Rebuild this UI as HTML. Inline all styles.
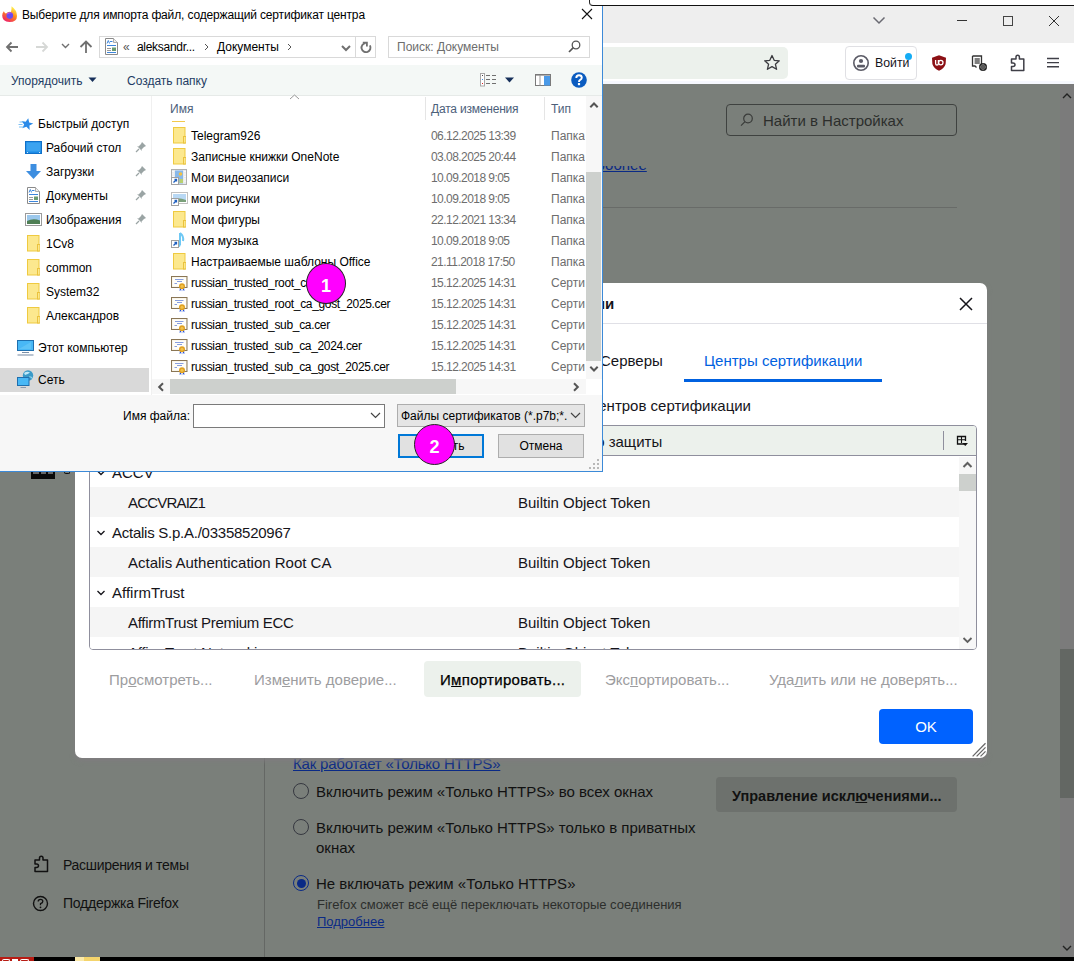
<!DOCTYPE html>
<html><head><meta charset="utf-8">
<style>
*{box-sizing:border-box;margin:0;padding:0}
html,body{width:1074px;height:961px;overflow:hidden;background:#7a7f7a;font-family:"Liberation Sans",sans-serif;position:relative}
.a{position:absolute;white-space:nowrap}
.t12{font-size:12px;line-height:16px}
.dt{letter-spacing:-0.55px}
.b14{line-height:14px}
.t15{font-size:15px;line-height:20px}
</style></head><body>

<!-- top strip of window behind -->


<!-- firefox tab bar -->
<div class="a" style="left:602px;top:6px;width:472px;height:37px;background:#eeeeee"></div>
<!-- tab list chevron -->
<svg class="a" style="left:872px;top:15px" width="14" height="10" viewBox="0 0 14 10"><path d="M1.5 2.5 L7 8 L12.5 2.5" fill="none" stroke="#6a6a72" stroke-width="1.5"/></svg>
<!-- min max close -->
<div class="a" style="left:957px;top:20px;width:10px;height:1px;background:#333"></div>
<div class="a" style="left:1003px;top:16px;width:10px;height:10px;border:1.2px solid #444"></div>
<svg class="a" style="left:1049px;top:16px" width="10" height="10" viewBox="0 0 10 10"><path d="M0 0 L10 10 M10 0 L0 10" stroke="#333" stroke-width="1"/></svg>

<!-- toolbar -->
<div class="a" style="left:602px;top:43px;width:472px;height:41px;background:#fff"></div>
<div class="a" style="left:602px;top:81px;width:472px;height:3px;background:#f6f8fe"></div>
<div class="a" style="left:602px;top:47px;width:186px;height:32px;background:#ecf1ec;border-radius:0 5px 5px 0"></div>
<svg class="a" style="left:763px;top:54px" width="18" height="18" viewBox="0 0 18 18"><path d="M9 1.5 L11.2 6.3 L16.3 6.8 L12.4 10.2 L13.6 15.3 L9 12.6 L4.4 15.3 L5.6 10.2 L1.7 6.8 L6.8 6.3 Z" fill="none" stroke="#3a3a3f" stroke-width="1.3" stroke-linejoin="round"/></svg>
<div class="a" style="left:845px;top:46px;width:72px;height:34px;border:1px solid #e0e0e4;border-radius:4px;background:#fff"></div>
<svg class="a" style="left:852px;top:54px" width="18" height="18" viewBox="0 0 18 18"><circle cx="9" cy="9" r="7.2" fill="none" stroke="#5b5b66" stroke-width="1.6"/><circle cx="9" cy="7" r="2.1" fill="#5b5b66"/><rect x="5" y="10.8" width="8" height="2.6" rx="1" fill="#5b5b66"/></svg>
<div class="a" style="left:875px;top:55px;color:#15141a;font-size:12.3px;line-height:16px">Войти</div>
<div class="a" style="left:905px;top:53px;width:7px;height:7px;border-radius:50%;background:#14acf5"></div>
<svg class="a" style="left:931px;top:55px" width="16" height="16" viewBox="0 0 16 16"><path d="M8 0.3 L15 2.8 L14.6 9 Q13.2 13.8 8 15.8 Q2.8 13.8 1.4 9 L1 2.8 Z" fill="#8c1015"/><path d="M4.6 5 V8.4 Q4.6 10 6 10 Q7.4 10 7.4 8.4 V5" fill="none" stroke="#fff" stroke-width="1.3"/><circle cx="9.8" cy="7.6" r="2.2" fill="none" stroke="#fff" stroke-width="1.3"/></svg>
<svg class="a" style="left:971px;top:55px" width="17" height="17" viewBox="0 0 17 17"><path d="M1.5 1 H10.5 V9 M1.5 1 V11 H4 L5.5 12.5" fill="none" stroke="#333" stroke-width="1.3"/><path d="M3.5 3 H9 V9 H3.5Z" fill="#9a9a9a"/><path d="M5 3 V9 M7 3 V9" stroke="#555" stroke-width="0.8"/><circle cx="12" cy="12" r="4" fill="#222"/><circle cx="12" cy="12" r="2.3" fill="none" stroke="#888" stroke-width="0.8"/><path d="M8.5 12 H15.5 M12 8.5 V15.5" stroke="#888" stroke-width="0.7"/></svg>
<svg class="a" style="left:1009px;top:54px" width="17" height="18" viewBox="0 0 17 18"><path d="M2.5 5 H7 V3 Q7 1.2 8.7 1.2 Q10.4 1.2 10.4 3 V5 H14.8 V16.5 H2.5 V12.5 H4 Q6 12.5 6 10.8 Q6 9 4 9 H2.5 Z" fill="none" stroke="#3f3f47" stroke-width="1.5" stroke-linejoin="round"/></svg>
<svg class="a" style="left:1046px;top:56px" width="14" height="13" viewBox="0 0 14 13"><path d="M1 2.5 H13 M1 6.6 H13 M1 10.8 H13" stroke="#3f3f47" stroke-width="1.4"/></svg>

<!-- ========== settings page (dimmed) ========== -->
<div class="a" style="left:1060px;top:84px;width:14px;height:873px;background:#7b7b7b"></div>
<div class="a" style="left:1060px;top:649px;width:14px;height:149px;background:#636763"></div>
<svg class="a" style="left:1061px;top:92px" width="12" height="8" viewBox="0 0 12 8"><path d="M2 6 L6 2 L10 6" fill="none" stroke="#222" stroke-width="1.4"/></svg>
<svg class="a" style="left:1061px;top:944px" width="12" height="8" viewBox="0 0 12 8"><path d="M2 2 L6 6 L10 2" fill="none" stroke="#222" stroke-width="1.4"/></svg>

<div class="a" style="left:264px;top:84px;width:1px;height:873px;background:#646764"></div>

<!-- search -->
<div class="a" style="left:726px;top:104px;width:231px;height:32px;border:1px solid #3f4240;border-radius:4px"></div>
<svg class="a" style="left:739px;top:112px" width="16" height="16" viewBox="0 0 16 16"><circle cx="9" cy="6.5" r="4.3" fill="none" stroke="#3a3c3a" stroke-width="1.2"/><path d="M6 9.6 L2 13.6" stroke="#3a3c3a" stroke-width="1.3"/></svg>
<div class="a t15" style="left:763px;top:111px;color:#2c2e2c">Найти в Настройках</div>

<div class="a" style="left:560px;top:166px;width:100px;height:8px;overflow:hidden"><div class="a t15" style="left:9px;top:-11px;color:#0a2a86;text-decoration:underline">Подробнее</div></div>
<div class="a" style="left:293px;top:207px;width:664px;height:1px;background:#686b68"></div>

<!-- black icon peeking -->
<div class="a" style="left:31px;top:462px;width:24px;height:17px;background:#0a0a0a"></div><div class="a" style="left:33px;top:472px;width:6px;height:2px;background:#666"></div><div class="a" style="left:41px;top:472px;width:5px;height:2px;background:#666"></div><div class="a" style="left:48px;top:472px;width:5px;height:2px;background:#666"></div><div class="a" style="left:64px;top:470px;width:6px;height:4px;border:1.5px solid #111;border-top:none;border-radius:0 0 2px 2px"></div>

<div class="a t15" style="left:293px;top:754px;color:#0a2a86;text-decoration:underline;letter-spacing:-0.2px">Как работает «Только HTTPS»</div>
<div class="a" style="left:293px;top:783px;width:16px;height:16px;border:1.3px solid #363840;border-radius:50%"></div>
<div class="a t15" style="left:316px;top:782px;color:#111">Включить режим «Только HTTPS» во всех окнах</div>
<div class="a" style="left:293px;top:819px;width:16px;height:16px;border:1.3px solid #363840;border-radius:50%"></div>
<div class="a t15" style="left:316px;top:818px;color:#111">Включить режим «Только HTTPS» только в приватных</div>
<div class="a t15" style="left:316px;top:838px;color:#111">окнах</div>
<div class="a" style="left:293px;top:875px;width:16px;height:16px;border:1.6px solid #0a2a86;border-radius:50%;background:#7a7f7a"></div>
<div class="a" style="left:296.5px;top:878.5px;width:9px;height:9px;border-radius:50%;background:#0a2a86"></div>
<div class="a t15" style="left:316px;top:874px;color:#111">Не включать режим «Только HTTPS»</div>
<div class="a" style="left:317px;top:897px;font-size:13px;line-height:15px;color:#2c2e2c">Firefox сможет всё ещё переключать некоторые соединения</div>
<div class="a" style="left:317px;top:914px;font-size:13px;line-height:15px;color:#0a2a86;text-decoration:underline">Подробнее</div>
<div class="a" style="left:716px;top:777px;width:241px;height:35px;border-radius:4px;background:#6d716d"></div>
<div class="a t15" style="left:732px;top:786px;color:#111;font-weight:bold;font-size:14.5px">Управление искл<u>ю</u>чениями...</div>

<svg class="a" style="left:33px;top:855px" width="17" height="18" viewBox="0 0 17 18"><path d="M2 5 H6.5 V3 Q6.5 1.2 8.3 1.2 Q10 1.2 10 3 V5 H14.5 V16.5 H2 V12.5 H3.5 Q5.5 12.5 5.5 10.8 Q5.5 9 3.5 9 H2 Z" fill="none" stroke="#111" stroke-width="1.5" stroke-linejoin="round"/></svg>
<div class="a t15" style="left:63px;top:855px;color:#111;font-size:14px;letter-spacing:-0.3px">Расширения и темы</div>
<svg class="a" style="left:32px;top:895px" width="17" height="17" viewBox="0 0 17 17"><circle cx="8.5" cy="8.5" r="7" fill="none" stroke="#111" stroke-width="1.4"/><path d="M6.2 6.6 Q6.2 4.4 8.5 4.4 Q10.8 4.4 10.8 6.4 Q10.8 7.8 8.5 8.6 V10.2" fill="none" stroke="#111" stroke-width="1.3"/><circle cx="8.5" cy="12.3" r="0.9" fill="#111"/></svg>
<div class="a t15" style="left:63px;top:893px;color:#111;font-size:14px;letter-spacing:-0.25px">Поддержка Firefox</div>

<!-- taskbar -->
<div class="a" style="left:0;top:957px;width:1074px;height:4px;background:#000"></div>
<div class="a" style="left:0;top:957px;width:34px;height:4px;background:#b81c14"></div><div class="a" style="left:2px;top:959px;width:8px;height:3px;border:1.2px solid #fff;border-bottom:none;border-radius:2px 2px 0 0"></div><div class="a" style="left:12px;top:959px;width:6px;height:3px;background:#fff"></div><div class="a" style="left:20px;top:959px;width:9px;height:3px;border:1.2px solid #fff;border-bottom:none;border-radius:2px 2px 0 0"></div>
<div class="a" style="left:75px;top:957px;width:25px;height:4px;background:#f4d46c"></div><div class="a" style="left:75px;top:957px;width:9px;height:4px;background:#fbe9a8"></div>

<!-- ========== certificate manager modal ========== -->
<div id="modal" class="a" style="left:75px;top:283px;width:912px;height:475px;background:#fff;border-radius:7px;overflow:hidden;box-shadow:0 3px 5px rgba(128,124,128,0.9)">
<div class="a t15" style="left:330px;top:11px;font-weight:bold;color:#15141a">Управление сертификатами</div>
<svg class="a" style="left:884px;top:14px" width="14" height="14" viewBox="0 0 14 14"><path d="M1 1 L13 13 M13 1 L1 13" stroke="#15141a" stroke-width="1.5"/></svg>
<div class="a" style="left:0;top:40px;width:912px;height:1px;background:#e0e0e6"></div>
<div class="a t15" style="left:75px;top:68px;color:#15141a">Ваши сертификаты</div>
<div class="a t15" style="left:245px;top:68px;color:#15141a">Решения об аутентификации</div>
<div class="a t15" style="left:476px;top:68px;color:#15141a">Люди</div>
<div class="a t15" style="left:525px;top:68px;color:#15141a">Серверы</div>
<div class="a t15" style="left:629px;top:68px;color:#0061e0">Центры сертификации</div>
<div class="a" style="left:609px;top:96px;width:198px;height:3px;background:#0061e0"></div>
<div class="a t15" style="left:0px;top:113px;width:676px;text-align:right;color:#15141a">У вас хранятся сертификаты, служащие для идентификации следующих центров сертификации</div>
<!-- tree -->
<div class="a" style="left:14px;top:142px;width:888px;height:225px;border:1px solid #8f8f9d;border-radius:4px;overflow:hidden">
  <div class="a" style="left:0;top:0;width:886px;height:30px;background:#ecf1ec;border-bottom:1px solid #8f8f9d"></div>
  <div class="a t15" style="left:23px;top:6px;color:#15141a">Имя сертификата</div>
  <div class="a t15" style="left:436px;top:6px;color:#15141a">Устройство защиты</div>
  <div class="a" style="left:853px;top:5px;width:1px;height:19px;background:#8f8f9d"></div>
  <svg class="a" style="left:866px;top:9px" width="14" height="14" viewBox="0 0 14 14"><path d="M8.5 9 H1.5 V1.5 H9.5 V6" fill="none" stroke="#111" stroke-width="1.3"/><path d="M1.5 4.8 H9.5 M5.5 1.5 V8" stroke="#111" stroke-width="1.1"/><path d="M6.5 8 H12 L9.25 11Z" fill="#111"/></svg>
  <div class="a" style="left:0;top:31px;width:869px;height:193px;background:#fff">
    <div class="a" style="left:0;top:30px;width:869px;height:30px;background:#f5f5f5"></div>
    <div class="a" style="left:0;top:90px;width:869px;height:30px;background:#f5f5f5"></div>
    <div class="a" style="left:0;top:150px;width:869px;height:30px;background:#f5f5f5"></div>
  </div>
  <div class="a" style="left:869px;top:31px;width:17px;height:193px;background:#f7f7f7"></div>
  <div class="a" style="left:869px;top:48px;width:17px;height:17px;background:#cdd0cd"></div>
  <svg class="a" style="left:871px;top:34px" width="13" height="10" viewBox="0 0 13 10"><path d="M2.5 7 L6.5 3 L10.5 7" fill="none" stroke="#606060" stroke-width="2"/></svg>
  <svg class="a" style="left:871px;top:209px" width="13" height="10" viewBox="0 0 13 10"><path d="M2.5 3 L6.5 7 L10.5 3" fill="none" stroke="#606060" stroke-width="1.8"/></svg>
</div>
<div class="a" style="left:15px;top:174px;width:868px;height:192px;overflow:hidden">
  <svg class="a" style="left:6px;top:12px" width="10" height="8" viewBox="0 0 10 8"><path d="M1.5 2 L5 5.5 L8.5 2" fill="none" stroke="#15141a" stroke-width="1.3"/></svg>
  <div class="a t15" style="left:22px;top:6px;color:#15141a">ACCV</div>
  <div class="a t15" style="left:38px;top:36px;color:#15141a;letter-spacing:-0.8px">ACCVRAIZ1</div>
  <div class="a t15" style="left:428px;top:36px;color:#15141a">Builtin Object Token</div>
  <svg class="a" style="left:6px;top:72px" width="10" height="8" viewBox="0 0 10 8"><path d="M1.5 2 L5 5.5 L8.5 2" fill="none" stroke="#15141a" stroke-width="1.3"/></svg>
  <div class="a t15" style="left:22px;top:66px;color:#15141a;letter-spacing:-0.25px">Actalis S.p.A./03358520967</div>
  <div class="a t15" style="left:38px;top:96px;color:#15141a">Actalis Authentication Root CA</div>
  <div class="a t15" style="left:428px;top:96px;color:#15141a">Builtin Object Token</div>
  <svg class="a" style="left:6px;top:132px" width="10" height="8" viewBox="0 0 10 8"><path d="M1.5 2 L5 5.5 L8.5 2" fill="none" stroke="#15141a" stroke-width="1.3"/></svg>
  <div class="a t15" style="left:22px;top:126px;color:#15141a">AffirmTrust</div>
  <div class="a t15" style="left:38px;top:156px;color:#15141a;letter-spacing:-0.3px">AffirmTrust Premium ECC</div>
  <div class="a t15" style="left:428px;top:156px;color:#15141a">Builtin Object Token</div>
  <div class="a t15" style="left:38px;top:186px;color:#15141a;letter-spacing:-0.3px">AffirmTrust Networking</div>
  <div class="a t15" style="left:428px;top:186px;color:#15141a">Builtin Object Token</div>
</div>
<!-- buttons -->
<div class="a t15" style="left:34px;top:387px;color:#9d9d9f">Пр<u>о</u>смотреть...</div>
<div class="a t15" style="left:179px;top:387px;color:#9d9d9f">Изм<u>е</u>нить доверие...</div>
<div class="a" style="left:349px;top:378px;width:157px;height:36px;border-radius:4px;background:#ecf1ec"></div>
<div class="a t15" style="left:365px;top:387px;color:#000;letter-spacing:0.3px;-webkit-text-stroke:0.25px #000">И<u>м</u>портировать...</div>
<div class="a t15" style="left:530px;top:387px;color:#9d9d9f">Экс<u>п</u>ортировать...</div>
<div class="a t15" style="left:694px;top:387px;color:#9d9d9f">Уда<u>л</u>ить или не доверять...</div>
<div class="a" style="left:804px;top:426px;width:94px;height:35px;border-radius:4px;background:#0062ff"></div>
<div class="a t15" style="left:804px;top:434px;width:94px;text-align:center;color:#fff">OK</div>
<svg class="a" style="left:895px;top:457px" width="17" height="17" viewBox="0 0 17 17"><path d="M2.6 16.4 L15.5 3.3 M6.6 16.4 L15.5 7.4 M10.5 16.4 L15.5 11.4" stroke="#6a6a6a" stroke-width="1.3"/></svg>
</div>

<!-- ========== file dialog ========== -->
<div id="fd" class="a" style="left:0;top:0;width:603px;height:472px;background:#f7f7f7;border-right:1px solid #3c8ad8;border-bottom:1px solid #3c8ad8;overflow:hidden">
<svg width="0" height="0" style="position:absolute">
<defs>
<g id="fold"><rect x="1.5" y="0.5" width="11.5" height="15.5" fill="#fce88e" stroke="#efca40"/><rect x="11.5" y="9.5" width="2.5" height="6.5" fill="#fce78a" stroke="#eac23e"/></g>
<g id="cert"><rect x="0.5" y="1.5" width="15.5" height="11" fill="#f3efe2" stroke="#8a7655"/><rect x="1.5" y="2.5" width="13.5" height="9" fill="#fffef8"/><path d="M4 4.5 H12.5 M6 6.5 H11 M3.5 8.5 H6" stroke="#6a86d8" stroke-width="0.8"/><path d="M9 12 L8.6 16 L10 15 L11 16.4Z M13 12 L13.4 16 L12 15 L11 16.4Z" fill="#1f4fe0"/><circle cx="11" cy="11.3" r="3" fill="#e0a020"/><circle cx="11" cy="11.3" r="1.5" fill="#f2c24a"/></g>
<g id="vid"><rect x="0.5" y="0.5" width="15" height="15" fill="#e8eaec" stroke="#b0b0b0"/><path d="M2 2 V14 M14 2 V14" stroke="#fff" stroke-width="1.4" stroke-dasharray="1.2 1.2"/><rect x="4" y="1.5" width="8" height="13" fill="#88b8ea"/><circle cx="9.5" cy="5" r="1.8" fill="#f2c040"/><rect x="4" y="8" width="3.5" height="3" fill="#e58ab0"/><rect x="8.5" y="10" width="3.5" height="4" fill="#b8d070"/><rect x="0.5" y="8.5" width="7" height="7" fill="#fff" stroke="#a0a0a0"/><path d="M2.5 13.5 L5.3 10.7 M3.5 10.5 H5.5 V12.5" stroke="#1f5fbf" stroke-width="1.3" fill="none"/></g>
<g id="pic"><rect x="0.5" y="2.5" width="16" height="11" fill="#fff" stroke="#c0c0c0"/><rect x="2" y="4" width="13" height="8" fill="#b8d8f4"/><path d="M2 9 Q8 7 15 10 V12 H2Z" fill="#7aa07a"/><rect x="0.5" y="8.5" width="7" height="7" fill="#fff" stroke="#a0a0a0"/><path d="M2.5 13.5 L5.3 10.7 M3.5 10.5 H5.5 V12.5" stroke="#1f5fbf" stroke-width="1.3" fill="none"/></g>
<g id="mus"><path d="M9 1 V13 M9 1 Q13 4 12 9" stroke="#6ec8f4" stroke-width="2" fill="none"/><ellipse cx="7.5" cy="13.5" rx="2" ry="1.6" fill="#6ec8f4"/><rect x="0.5" y="8.5" width="7" height="7" fill="#fff" stroke="#a0a0a0"/><path d="M2.5 13.5 L5.3 10.7 M3.5 10.5 H5.5 V12.5" stroke="#1f5fbf" stroke-width="1.3" fill="none"/></g>
<g id="star"><path d="M10 2 L11.8 6 L16 6.2 L12.7 9 L13.8 13.2 L10 10.8 L6.3 13.2 L7.3 9 L4 6.2 L8.2 6Z" fill="#2a8ae8" transform="rotate(12 10 8)"/><path d="M2.5 6 H6 M1.5 8.5 H5.5 M2 11 H6.5" stroke="#7cc0f4" stroke-width="1"/></g>
<g id="desk"><rect x="0.5" y="2.5" width="16" height="12" fill="#1d8be6" stroke="#1070c8"/><rect x="1.5" y="3.5" width="14" height="9" fill="#3ba3f0"/><path d="M2 13.5 H3 M14 13.5 H15" stroke="#fff" stroke-width="0.8"/></g>
<g id="down"><path d="M5.5 1 H11.5 V8 H16 L8.5 16 L1 8 H5.5Z" fill="#3d8ee0"/></g>
<g id="doc"><path d="M2.5 0.5 H10.5 L14.5 4.5 V16.5 H2.5Z" fill="#fff" stroke="#8a8a8a"/><path d="M10.5 0.5 V4.5 H14.5" fill="#eee" stroke="#9a9a9a" stroke-width="0.8"/><path d="M4 5.5 L5.3 2.5 L6.6 5.5" stroke="#2a7ad8" stroke-width="0.9" fill="none"/><path d="M7 3.5 H9.5 M4 7.5 H13 M4 14.5 H13" stroke="#3c86dc" stroke-width="1"/><path d="M4 10.5 H8 M4 12.5 H8" stroke="#9a9a9a" stroke-width="1"/><rect x="9" y="9.5" width="4" height="3.5" fill="#6a9a70"/></g>
<g id="img"><rect x="0.5" y="2.5" width="16" height="12" fill="#fff" stroke="#9a9a9a"/><rect x="2" y="4" width="13" height="9" fill="#9cc8ec"/><path d="M2 10 Q8 7 15 9.5 V13 H2Z" fill="#4f7f55"/></g>
<g id="pc"><rect x="0.5" y="2.5" width="16" height="10" fill="#48b8f6" stroke="#1f6fae"/><path d="M2 11 L14 4 V11Z" fill="#6ccaf8" opacity="0.6"/><path d="M5 14.5 H12" stroke="#7a8fa8" stroke-width="1"/><path d="M0.5 17 H16.5" stroke="#8a9ab0" stroke-width="1.2"/></g>
<g id="net"><circle cx="11" cy="5.5" r="5.2" fill="#3a9ac8"/><path d="M7 3 Q10 1 13 2.5 Q11 4 8 5Z" fill="#bfe8f8"/><path d="M12 7 Q15 6 15.5 9" stroke="#9edcf0" stroke-width="1" fill="none"/><rect x="0.5" y="7.5" width="11.5" height="8" fill="#48b8f6" stroke="#1f6fae"/><path d="M3.5 17.5 H9" stroke="#8a9ab0" stroke-width="1"/></g>
<g id="pin"><path d="M7 1 L11 5 L9 6 L6.5 8.5 L7 10 L2 5 L3.5 5.5 L6 3Z" fill="#9aa4a4"/><path d="M4 8 L1 11" stroke="#9aa4a4" stroke-width="1.3"/></g>
</defs></svg>
<div class="a" style="left:0;top:0;width:602px;height:65px;background:#fff"></div>
<svg class="a" style="left:1px;top:5px" width="17" height="18" viewBox="0 0 17 18"><defs><linearGradient id="ffg" x1="0.8" y1="0.1" x2="0.3" y2="1"><stop offset="0" stop-color="#fff44f"/><stop offset="0.45" stop-color="#ff8a1a"/><stop offset="1" stop-color="#ee1f6a"/></linearGradient></defs><path d="M10.5 1.2 Q16 5 16 11 Q16 17 8.5 17 Q1.2 17 1.2 10.5 Q1.2 8 2.8 6.2 Q4 8.5 5 8.6 Q7.5 6 10 7 Q10.8 4 10.5 1.2Z" fill="url(#ffg)"/><circle cx="8.8" cy="10.6" r="3.3" fill="#6a4af0"/><path d="M5.8 8.2 Q9 6.4 12 8.6 Q9 7.8 6.4 9.6Z" fill="#c04cf0"/></svg>
<div class="a t12" style="left:22px;top:7px;color:#000;letter-spacing:-0.15px">Выберите для импорта файл, содержащий сертификат центра</div>
<svg class="a" style="left:581px;top:8px" width="12" height="12" viewBox="0 0 12 12"><path d="M1 1 L11 11 M11 1 L1 11" stroke="#111" stroke-width="1.1"/></svg>

<svg class="a" style="left:5px;top:41px" width="14" height="12" viewBox="0 0 14 12"><path d="M13 6 H2 M6.5 1.5 L2 6 L6.5 10.5" fill="none" stroke="#707070" stroke-width="1.8"/></svg>
<svg class="a" style="left:35px;top:41px" width="14" height="12" viewBox="0 0 14 12"><path d="M1 6 H12 M7.5 1.5 L12 6 L7.5 10.5" fill="none" stroke="#d6d8d6" stroke-width="1.8"/></svg>
<svg class="a" style="left:61px;top:43px" width="9" height="6" viewBox="0 0 9 6"><path d="M1 1 L4.5 4.5 L8 1" fill="none" stroke="#707070" stroke-width="1.4"/></svg>
<svg class="a" style="left:79px;top:40px" width="14" height="14" viewBox="0 0 14 14"><path d="M7 13 V2 M1.5 7 L7 1.5 L12.5 7" fill="none" stroke="#707070" stroke-width="1.8"/></svg>

<div class="a" style="left:99px;top:36px;width:277px;height:22px;border:1px solid #d9d9d9;background:#fff"></div>
<svg class="a" style="left:103px;top:38px" width="17" height="17" viewBox="0 0 17 17"><use href="#doc"/></svg>
<div class="a t12" style="left:123px;top:39px;color:#555">«</div>
<div class="a t12" style="left:137px;top:39px;color:#000;letter-spacing:-0.3px">aleksandr...</div>
<svg class="a" style="left:204px;top:43px" width="5" height="8" viewBox="0 0 5 8"><path d="M1 1 L4 4 L1 7" fill="none" stroke="#555" stroke-width="1"/></svg>
<div class="a t12" style="left:217px;top:39px;color:#000">Документы</div>
<svg class="a" style="left:287px;top:43px" width="5" height="8" viewBox="0 0 5 8"><path d="M1 1 L4 4 L1 7" fill="none" stroke="#555" stroke-width="1"/></svg>
<svg class="a" style="left:341px;top:45px" width="10" height="7" viewBox="0 0 10 7"><path d="M1 1 L5 5 L9 1" fill="none" stroke="#707070" stroke-width="2"/></svg>
<div class="a" style="left:355px;top:37px;width:1px;height:20px;background:#d9d9d9"></div>
<svg class="a" style="left:359px;top:40px" width="14" height="15" viewBox="0 0 14 15"><path d="M10.9 5.35 A4.5 4.5 0 1 1 6.6 3.1" fill="none" stroke="#707070" stroke-width="1.9"/><path d="M3.8 2.6 H7.9 V6.6" fill="none" stroke="#707070" stroke-width="1.8"/></svg>

<div class="a" style="left:388px;top:36px;width:202px;height:22px;border:1px solid #d9d9d9;background:#fff"></div>
<div class="a t12" style="left:397px;top:39px;color:#6d6d6d">Поиск: Документы</div>
<svg class="a" style="left:568px;top:40px" width="13" height="13" viewBox="0 0 13 13"><circle cx="8" cy="5" r="3.8" fill="none" stroke="#555" stroke-width="1.3"/><path d="M5.3 7.7 L1 12" stroke="#555" stroke-width="1.7"/></svg>

<div class="a" style="left:0;top:65px;width:602px;height:31px;background:#f4f8f6;border-bottom:1px solid #e6eae8"></div>
<div class="a t12" style="left:11px;top:73px;color:#1e3c64">Упорядочить</div>
<svg class="a" style="left:88px;top:77px" width="9" height="6" viewBox="0 0 9 6"><path d="M0.5 0.5 H8.5 L4.5 5Z" fill="#16305a"/></svg>
<div class="a t12" style="left:127px;top:73px;color:#1e3c64">Создать папку</div>
<svg class="a" style="left:480px;top:73px" width="17" height="14" viewBox="0 0 17 14"><rect x="0.5" y="0.5" width="4" height="12.5" fill="#fff" stroke="#a8a8a8"/><rect x="2" y="2" width="1" height="1" fill="#444"/><rect x="2" y="6" width="1" height="1" fill="#3a8ee8"/><rect x="2" y="10" width="1" height="1" fill="#e02020"/><path d="M6 2.5 H10 M12 2.5 H16 M6 6.5 H10 M12 6.5 H16 M6 10.5 H10 M12 10.5 H16" stroke="#707070" stroke-width="1"/></svg>
<svg class="a" style="left:505px;top:77px" width="9" height="6" viewBox="0 0 9 6"><path d="M0 0.5 H9 L4.5 5.5Z" fill="#16305a"/></svg>
<svg class="a" style="left:535px;top:74px" width="16" height="12" viewBox="0 0 16 12"><rect x="0.5" y="0.5" width="15" height="11" fill="#fff" stroke="#7a7a7a"/><rect x="1" y="1" width="14" height="1" fill="#b0b0b0"/><rect x="4.5" y="1" width="1" height="10.5" fill="#9a9a9a"/><rect x="9" y="2" width="6" height="9.5" fill="#4a9ae8"/></svg>
<svg class="a" style="left:571px;top:72px" width="16" height="16" viewBox="0 0 16 16"><circle cx="8" cy="8" r="7.8" fill="#0b5cc0"/><path d="M5.3 6 Q5.3 3.3 8 3.3 Q10.8 3.3 10.8 5.8 Q10.8 7.3 8.9 8.2 Q8 8.7 8 9.9" fill="none" stroke="#fff" stroke-width="1.9"/><rect x="6.9" y="11" width="2.2" height="2.2" fill="#fff"/></svg>

<!-- main panes -->
<div class="a" style="left:0;top:96px;width:602px;height:299px;background:#fff"></div>
<div class="a" style="left:0;top:368px;width:149px;height:24px;background:#d9d9d9"></div>
<div class="a" style="left:151px;top:96px;width:1px;height:299px;background:#f0f0f0"></div>
<svg class="a" style="left:17px;top:116px" width="17" height="17" viewBox="0 0 17 17"><use href="#star"/></svg>
<div class="a t12" style="left:38px;top:116px;color:#000">Быстрый доступ</div>
<svg class="a" style="left:25px;top:139px" width="17" height="17" viewBox="0 0 17 17"><use href="#desk"/></svg>
<div class="a t12" style="left:46px;top:140px;color:#000">Рабочий стол</div>
<svg class="a" style="left:135px;top:141px" width="12" height="12" viewBox="0 0 12 12"><use href="#pin"/></svg>
<svg class="a" style="left:25px;top:163px" width="17" height="17" viewBox="0 0 17 17"><use href="#down"/></svg>
<div class="a t12" style="left:46px;top:164px;color:#000">Загрузки</div>
<svg class="a" style="left:135px;top:165px" width="12" height="12" viewBox="0 0 12 12"><use href="#pin"/></svg>
<svg class="a" style="left:25px;top:187px" width="17" height="17" viewBox="0 0 17 17"><use href="#doc"/></svg>
<div class="a t12" style="left:46px;top:188px;color:#000">Документы</div>
<svg class="a" style="left:135px;top:189px" width="12" height="12" viewBox="0 0 12 12"><use href="#pin"/></svg>
<svg class="a" style="left:25px;top:211px" width="17" height="17" viewBox="0 0 17 17"><use href="#img"/></svg>
<div class="a t12" style="left:46px;top:212px;color:#000">Изображения</div>
<svg class="a" style="left:135px;top:213px" width="12" height="12" viewBox="0 0 12 12"><use href="#pin"/></svg>
<svg class="a" style="left:26px;top:235px" width="14" height="17" viewBox="0 0 14 17"><use href="#fold"/></svg>
<div class="a t12" style="left:46px;top:236px;color:#000">1Cv8</div>
<svg class="a" style="left:26px;top:259px" width="14" height="17" viewBox="0 0 14 17"><use href="#fold"/></svg>
<div class="a t12" style="left:46px;top:260px;color:#000">common</div>
<svg class="a" style="left:26px;top:283px" width="14" height="17" viewBox="0 0 14 17"><use href="#fold"/></svg>
<div class="a t12" style="left:46px;top:284px;color:#000">System32</div>
<svg class="a" style="left:26px;top:307px" width="14" height="17" viewBox="0 0 14 17"><use href="#fold"/></svg>
<div class="a t12" style="left:46px;top:308px;color:#000">Александров</div>
<svg class="a" style="left:17px;top:338px" width="17" height="19" viewBox="0 0 17 19"><use href="#pc"/></svg>
<div class="a t12" style="left:38px;top:340px;color:#000">Этот компьютер</div>
<svg class="a" style="left:17px;top:370px" width="17" height="19" viewBox="0 0 17 19"><use href="#net"/></svg>
<div class="a t12" style="left:38px;top:372px;color:#000">Сеть</div>

<!-- list header -->
<div class="a t12" style="left:170px;top:101px;color:#4c607a">Имя</div>
<svg class="a" style="left:289px;top:94px" width="11" height="6" viewBox="0 0 11 6"><path d="M1 5 L5.5 1 L10 5" fill="none" stroke="#999" stroke-width="1"/></svg>
<div class="a" style="left:425px;top:97px;width:1px;height:23px;background:#e5e5e5"></div>
<div class="a t12" style="left:431px;top:101px;color:#4c607a;letter-spacing:-0.2px">Дата изменения</div>
<div class="a" style="left:544px;top:97px;width:1px;height:23px;background:#e5e5e5"></div>
<div class="a t12" style="left:551px;top:101px;color:#4c607a">Тип</div>
<div class="a" style="left:172px;top:121px;width:13px;height:1px;background:#f2c94c"></div>
<svg class="a" style="left:172px;top:127px" width="14" height="17" viewBox="0 0 14 17"><use href="#fold"/></svg>
<div class="a t12" style="left:191px;top:128px;color:#000">Telegram926</div>
<div class="a t12 dt" style="left:431px;top:128px;color:#6d6d6d">06.12.2025 13:39</div>
<div class="a t12" style="left:551px;top:128px;width:34px;overflow:hidden;color:#6d6d6d">Папка</div>
<svg class="a" style="left:172px;top:148px" width="14" height="17" viewBox="0 0 14 17"><use href="#fold"/></svg>
<div class="a t12" style="left:191px;top:149px;color:#000">Записные книжки OneNote</div>
<div class="a t12 dt" style="left:431px;top:149px;color:#6d6d6d">03.08.2025 20:44</div>
<div class="a t12" style="left:551px;top:149px;width:34px;overflow:hidden;color:#6d6d6d">Папка</div>
<svg class="a" style="left:171px;top:169px" width="17" height="17" viewBox="0 0 17 17"><use href="#vid"/></svg>
<div class="a t12" style="left:191px;top:170px;color:#000">Мои видеозаписи</div>
<div class="a t12 dt" style="left:431px;top:170px;color:#6d6d6d">10.09.2018 9:05</div>
<div class="a t12" style="left:551px;top:170px;width:34px;overflow:hidden;color:#6d6d6d">Папка</div>
<svg class="a" style="left:171px;top:190px" width="17" height="17" viewBox="0 0 17 17"><use href="#pic"/></svg>
<div class="a t12" style="left:191px;top:191px;color:#000">мои рисунки</div>
<div class="a t12 dt" style="left:431px;top:191px;color:#6d6d6d">10.09.2018 9:05</div>
<div class="a t12" style="left:551px;top:191px;width:34px;overflow:hidden;color:#6d6d6d">Папка</div>
<svg class="a" style="left:172px;top:211px" width="14" height="17" viewBox="0 0 14 17"><use href="#fold"/></svg>
<div class="a t12" style="left:191px;top:212px;color:#000">Мои фигуры</div>
<div class="a t12 dt" style="left:431px;top:212px;color:#6d6d6d">22.12.2021 13:34</div>
<div class="a t12" style="left:551px;top:212px;width:34px;overflow:hidden;color:#6d6d6d">Папка</div>
<svg class="a" style="left:171px;top:232px" width="17" height="17" viewBox="0 0 17 17"><use href="#mus"/></svg>
<div class="a t12" style="left:191px;top:233px;color:#000">Моя музыка</div>
<div class="a t12 dt" style="left:431px;top:233px;color:#6d6d6d">10.09.2018 9:05</div>
<div class="a t12" style="left:551px;top:233px;width:34px;overflow:hidden;color:#6d6d6d">Папка</div>
<svg class="a" style="left:172px;top:253px" width="14" height="17" viewBox="0 0 14 17"><use href="#fold"/></svg>
<div class="a t12" style="left:191px;top:254px;color:#000">Настраиваемые шаблоны Office</div>
<div class="a t12 dt" style="left:431px;top:254px;color:#6d6d6d">21.11.2018 17:50</div>
<div class="a t12" style="left:551px;top:254px;width:34px;overflow:hidden;color:#6d6d6d">Папка</div>
<svg class="a" style="left:171px;top:275px" width="17" height="17" viewBox="0 0 17 17"><use href="#cert"/></svg>
<div class="a t12" style="left:191px;top:275px;color:#000;letter-spacing:-0.33px">russian_trusted_root_ca.cer</div>
<div class="a t12 dt" style="left:431px;top:275px;color:#6d6d6d">15.12.2025 14:31</div>
<div class="a t12" style="left:551px;top:275px;width:34px;overflow:hidden;color:#6d6d6d">Сертификат безопасности</div>
<svg class="a" style="left:171px;top:296px" width="17" height="17" viewBox="0 0 17 17"><use href="#cert"/></svg>
<div class="a t12" style="left:191px;top:296px;color:#000;letter-spacing:-0.33px">russian_trusted_root_ca_gost_2025.cer</div>
<div class="a t12 dt" style="left:431px;top:296px;color:#6d6d6d">15.12.2025 14:31</div>
<div class="a t12" style="left:551px;top:296px;width:34px;overflow:hidden;color:#6d6d6d">Сертификат безопасности</div>
<svg class="a" style="left:171px;top:317px" width="17" height="17" viewBox="0 0 17 17"><use href="#cert"/></svg>
<div class="a t12" style="left:191px;top:317px;color:#000;letter-spacing:-0.33px">russian_trusted_sub_ca.cer</div>
<div class="a t12 dt" style="left:431px;top:317px;color:#6d6d6d">15.12.2025 14:31</div>
<div class="a t12" style="left:551px;top:317px;width:34px;overflow:hidden;color:#6d6d6d">Сертификат безопасности</div>
<svg class="a" style="left:171px;top:338px" width="17" height="17" viewBox="0 0 17 17"><use href="#cert"/></svg>
<div class="a t12" style="left:191px;top:338px;color:#000;letter-spacing:-0.33px">russian_trusted_sub_ca_2024.cer</div>
<div class="a t12 dt" style="left:431px;top:338px;color:#6d6d6d">15.12.2025 14:31</div>
<div class="a t12" style="left:551px;top:338px;width:34px;overflow:hidden;color:#6d6d6d">Сертификат безопасности</div>
<svg class="a" style="left:171px;top:359px" width="17" height="17" viewBox="0 0 17 17"><use href="#cert"/></svg>
<div class="a t12" style="left:191px;top:359px;color:#000;letter-spacing:-0.33px">russian_trusted_sub_ca_gost_2025.cer</div>
<div class="a t12 dt" style="left:431px;top:359px;color:#6d6d6d">15.12.2025 14:31</div>
<div class="a t12" style="left:551px;top:359px;width:34px;overflow:hidden;color:#6d6d6d">Сертификат безопасности</div>

<!-- v scrollbar -->
<div class="a" style="left:586px;top:96px;width:16px;height:283px;background:#f7f7f7"></div>
<div class="a" style="left:586px;top:172px;width:15px;height:189px;background:#cdd0cd"></div>
<svg class="a" style="left:589px;top:101px" width="10" height="8" viewBox="0 0 10 8"><path d="M1.3 6.3 L5 2.5 L8.7 6.3" fill="none" stroke="#555" stroke-width="2"/></svg>
<svg class="a" style="left:589px;top:365px" width="10" height="8" viewBox="0 0 10 8"><path d="M1.3 1.7 L5 5.5 L8.7 1.7" fill="none" stroke="#555" stroke-width="2"/></svg>
<!-- h scrollbar -->
<div class="a" style="left:152px;top:379px;width:434px;height:15px;background:#f7f7f7"></div>
<div class="a" style="left:170px;top:379px;width:286px;height:15px;background:#cdd0cd"></div>
<svg class="a" style="left:157px;top:382px" width="8" height="10" viewBox="0 0 8 10"><path d="M6 1.3 L2.2 5 L6 8.7" fill="none" stroke="#555" stroke-width="2"/></svg>
<svg class="a" style="left:572px;top:382px" width="8" height="10" viewBox="0 0 8 10"><path d="M2 1.3 L5.8 5 L2 8.7" fill="none" stroke="#555" stroke-width="2"/></svg>

<!-- bottom -->
<div class="a t12 b14" style="left:123px;top:409px;color:#000">Имя файла:</div>
<div class="a" style="left:193px;top:404px;width:192px;height:24px;border:1px solid #7a7a7a;background:#fff"></div>
<svg class="a" style="left:370px;top:412px" width="11" height="7" viewBox="0 0 11 7"><path d="M1 1 L5.5 5.5 L10 1" fill="none" stroke="#444" stroke-width="1.2"/></svg>
<div class="a" style="left:397px;top:404px;width:188px;height:23px;border:1px solid #adadad;background:#e5e5e5"></div>
<div class="a t12 b14" style="left:401px;top:409px;color:#000">Файлы сертификатов (*.p7b;*.</div>
<svg class="a" style="left:570px;top:412px" width="11" height="7" viewBox="0 0 11 7"><path d="M1 1 L5.5 5.5 L10 1" fill="none" stroke="#444" stroke-width="1.2"/></svg>
<div class="a" style="left:398px;top:434px;width:86px;height:24px;border:2px solid #0078d7;background:#e1e1e1"></div>
<div class="a t12 b14" style="left:398px;top:439px;width:86px;text-align:center;color:#000">Открыть</div>
<div class="a" style="left:498px;top:434px;width:86px;height:24px;border:1px solid #adadad;background:#e1e1e1"></div>
<div class="a t12 b14" style="left:498px;top:439px;width:86px;text-align:center;color:#000">Отмена</div>
<svg class="a" style="left:589px;top:459px" width="11" height="11" viewBox="0 0 11 11"><g fill="#b8b8b8"><rect x="8" y="0" width="2" height="2"/><rect x="4" y="4" width="2" height="2"/><rect x="8" y="4" width="2" height="2"/><rect x="0" y="8" width="2" height="2"/><rect x="4" y="8" width="2" height="2"/><rect x="8" y="8" width="2" height="2"/></g></svg>

<!-- markers -->
<div class="a" style="left:306px;top:263px;width:40px;height:41px;border-radius:50%;background:#ff00ff;border:1.8px solid #262626"></div>
<div class="a" style="left:306px;top:275px;width:40px;text-align:center;color:#fff;font-weight:bold;font-size:18px;line-height:22px">1</div>
<div class="a" style="left:414px;top:424px;width:41px;height:41px;border-radius:50%;background:#ff00ff;border:1.8px solid #262626"></div>
<div class="a" style="left:414px;top:436px;width:41px;text-align:center;color:#fff;font-weight:bold;font-size:18px;line-height:22px">2</div>
</div>

<div class="a" style="left:589px;top:-2px;width:490px;height:8px;background:#fff;border-bottom:1.5px solid #111;border-left:1.5px solid #222;border-bottom-left-radius:4px"></div>
</body></html>
